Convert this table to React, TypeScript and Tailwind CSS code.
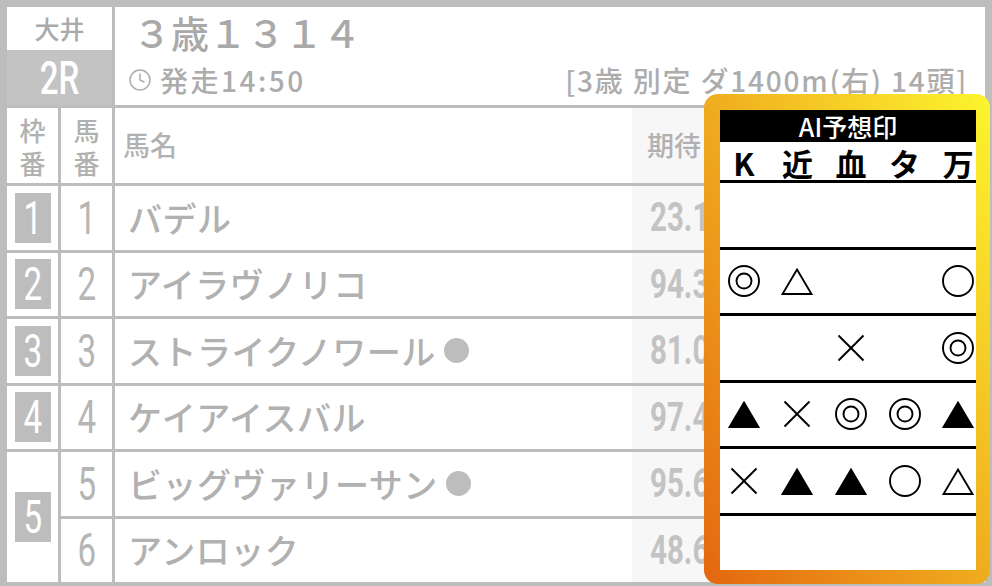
import { Clock } from 'lucide-react';

type Mark = '' | 'dbl' | 'circle' | 'tri' | 'solid' | 'x';

const RACES = [
  { waku: 1, num: 1, name: 'バデル', dot: false, odds: '23.1', marks: ['', '', '', '', ''] as Mark[] },
  { waku: 2, num: 2, name: 'アイラヴノリコ', dot: false, odds: '94.3', marks: ['dbl', 'tri', '', '', 'circle'] as Mark[] },
  { waku: 3, num: 3, name: 'ストライクノワール', dot: true, odds: '81.0', marks: ['', '', 'x', '', 'dbl'] as Mark[] },
  { waku: 4, num: 4, name: 'ケイアイスバル', dot: false, odds: '97.4', marks: ['solid', 'x', 'dbl', 'dbl', 'solid'] as Mark[] },
  { waku: 5, num: 5, name: 'ビッグヴァリーサン', dot: true, odds: '95.6', marks: ['x', 'solid', 'solid', 'circle', 'tri'] as Mark[] },
  { waku: 5, num: 6, name: 'アンロック', dot: false, odds: '48.6', marks: ['', '', '', '', ''] as Mark[] },
];

const SOURCES = ['K', '近', '血', 'タ', '万'];

// narrow digits, like the condensed face in the original
function Narrow({ children, className = '' }: { children: React.ReactNode; className?: string }) {
  return (
    <span className={`inline-block font-['Roboto',sans-serif] scale-x-[0.72] ${className}`}>
      {children}
    </span>
  );
}

function MarkIcon({ type }: { type: Mark }) {
  if (!type) return null;
  return (
    <svg width="32" height="32" viewBox="0 0 32 32" fill="none" stroke="#000" strokeWidth="1.9">
      {type === 'dbl' && (
        <>
          <circle cx="16" cy="16" r="15" />
          <circle cx="16" cy="16" r="7.5" />
        </>
      )}
      {type === 'circle' && <circle cx="16" cy="16" r="15" />}
      {type === 'tri' && <polygon points="16,4.5 30.5,29 1.5,29" />}
      {type === 'solid' && <polygon points="16,4.5 30.5,29 1.5,29" fill="#000" />}
      {type === 'x' && (
        <>
          <line x1="3.5" y1="3.5" x2="28.5" y2="28.5" />
          <line x1="28.5" y1="3.5" x2="3.5" y2="28.5" />
        </>
      )}
    </svg>
  );
}

export default function App() {
  return (
    <div className="relative w-[992px] h-[586px] overflow-hidden bg-white font-['Noto_Sans_CJK_JP',sans-serif] font-medium text-[#b1b1b1]">
      <div className="grid h-full grid-cols-[51px_51px_1fr] grid-rows-[98px_75px_repeat(6,63.5px)] gap-[3px] bg-[#bdbdbd] px-[7px] pt-[7px] pb-[4px]">
        {/* Course / race number */}
        <div className="col-span-2 flex flex-col">
          <div className="flex h-[43px] items-center justify-center bg-white text-[25px] leading-none text-[#aaaaaa]">
            大井
          </div>
          <div className="flex flex-1 items-center justify-center bg-[#c3c3c3] text-white">
            <Narrow className="text-[46px] leading-none">2R</Narrow>
          </div>
        </div>

        {/* Race title */}
        <div className="flex flex-col bg-white">
          <div className="pl-[18px] pt-[5px] text-[38px] leading-[40px] text-[#a9a9a9]">３歳１３１４</div>
          <div className="mt-auto flex items-center justify-between pb-[8px] pl-[13px] pr-[17px] text-[28px] leading-[34px] text-[#acacac]">
            <div className="flex items-center gap-[8px]">
              <Clock size={24} strokeWidth={1.5} className="text-[#acacac]" />
              <span className="tracking-[2.5px]">発走14:50</span>
            </div>
            <span className="tracking-[1.8px]">[3歳 別定 ダ1400m(右) 14頭]</span>
          </div>
        </div>

        {/* Column headings */}
        <div className="flex flex-col items-center justify-center bg-white text-[26px] leading-[33px]">
          <span>枠</span>
          <span>番</span>
        </div>
        <div className="flex flex-col items-center justify-center bg-white text-[26px] leading-[33px]">
          <span>馬</span>
          <span>番</span>
        </div>
        <div className="flex bg-white text-[27px]">
          <div className="flex flex-1 items-center pl-[8px]">馬名</div>
          <div className="flex w-[353px] items-center bg-[#f7f7f7] pl-[15px]">期待</div>
        </div>

        {/* Horses */}
        {RACES.map((h, i) => {
          const showWaku = i === 0 || RACES[i - 1].waku !== h.waku;
          const spans = showWaku && RACES[i + 1]?.waku === h.waku;
          return [
            showWaku && (
              <div
                key={`w${h.num}`}
                className={`col-start-1 flex items-center justify-center bg-white ${spans ? 'row-span-2' : ''}`}
              >
                <div className="flex h-[50px] w-[36px] items-center justify-center bg-[#bdbdbd] text-white">
                  <Narrow className="text-[46px] font-normal leading-none">{h.waku}</Narrow>
                </div>
              </div>
            ),
            <div key={`n${h.num}`} className="col-start-2 flex items-center justify-center bg-white">
              <Narrow className="text-[46px] font-normal leading-none text-[#b5b5b5]">{h.num}</Narrow>
            </div>,
            <div key={`h${h.num}`} className="flex bg-white">
              <div className="flex flex-1 items-center pl-[13px] text-[34px] leading-none tracking-[0.5px]">
                {h.name}
                {h.dot && <span className="ml-[8px] inline-block h-[25px] w-[25px] rounded-full bg-[#bdbdbd]" />}
              </div>
              <div className="flex w-[353px] items-center bg-[#f7f7f7] pl-[18px]">
                <Narrow className="origin-left text-[41px] font-bold leading-none text-[#c3c3c3]">{h.odds}</Narrow>
              </div>
            </div>,
          ];
        })}
      </div>

      {/* AI prediction marks */}
      <div className="absolute left-[704px] top-[94px] h-[490px] w-[286px] rounded-[14px] bg-linear-to-tr from-[#e3660f] via-[#efac1f] to-[#fcf62e] pb-[14px] pl-[16px] pr-[14px] pt-[16px]">
        <div className="flex h-full flex-col overflow-hidden bg-white">
          <div className="flex h-[32px] shrink-0 items-center justify-center bg-black text-[25px] font-medium leading-[32px] text-white">
            AI予想印
          </div>
          <div className="-ml-[3px] grid h-[41px] w-[268px] shrink-0 grid-cols-5 border-b-[3px] border-black text-[31px] font-bold leading-none text-black">
            {SOURCES.map((s) => (
              <div key={s} className="flex items-center justify-center pt-[2px]">
                {s}
              </div>
            ))}
          </div>
          {RACES.map((h, i) => (
            <div
              key={h.num}
              className={`-ml-[3px] grid w-[268px] shrink-0 grid-cols-5 ${i < 5 ? 'h-[66.5px] border-b-[3px] border-black' : 'h-[63.5px]'}`}
            >
              {h.marks.map((m, j) => (
                <div key={j} className="flex items-center justify-center">
                  <MarkIcon type={m} />
                </div>
              ))}
            </div>
          ))}
        </div>
      </div>
    </div>
  );
}
